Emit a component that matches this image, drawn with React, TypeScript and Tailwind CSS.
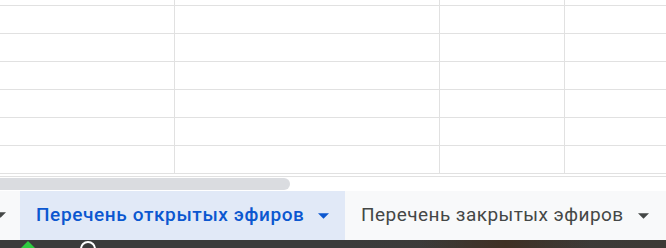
import React from "react";

const rows = Array.from({ length: 6 });

function Arrow({ className }: { className: string }) {
  return (
    <svg width="11" height="6" viewBox="0 0 10 5" className={className}>
      <path d="M0 0L5 5L10 0Z" fill="currentColor" />
    </svg>
  );
}

function Row({ h }: { h: string }) {
  return (
    <div className={`flex ${h} border-b border-[#e1e1e1]`}>
      <div className="w-[175px] shrink-0 border-r border-[#e1e1e1]" />
      <div className="w-[265px] shrink-0 border-r border-[#e1e1e1]" />
      <div className="w-[125px] shrink-0 border-r border-[#e1e1e1]" />
      <div className="flex-1" />
    </div>
  );
}

export default function App() {
  return (
    <div
      className="w-[666px] h-[248px] overflow-hidden bg-white flex flex-col"
      style={{ fontFamily: "Roboto, 'Noto Sans', sans-serif" }}
    >
      {/* Grid */}
      <Row h="h-[6px]" />
      {rows.map((_, i) => (
        <Row key={i} h="h-[28px]" />
      ))}

      {/* Scrollbar */}
      <div className="h-[3px] border-b border-[#e1e1e1]" />
      <div className="h-[14px] pt-[1px]">
        <div className="w-[290px] h-[12px] rounded-r-full bg-[#dadce0]" />
      </div>

      {/* Sheet tabs */}
      <div className="h-[49px] flex bg-[#f8f9fa] shrink-0 whitespace-nowrap">
        <div className="w-[20px] flex items-center overflow-hidden">
          <Arrow className="text-[#444746] -ml-[5px] -mt-[1px]" />
        </div>
        <div className="w-[325px] bg-[#e1e9f7] flex items-center pl-[16px] text-[#0b57d0] font-medium text-[19px] tracking-[0.62px]">
          <span>Перечень открытых эфиров</span>
          <Arrow className="ml-[13px] mt-[1px]" />
        </div>
        <div className="flex items-center pl-[16px] text-[#444746] text-[19px] tracking-[0.45px]">
          <span>Перечень закрытых эфиров</span>
          <Arrow className="ml-[14px] mt-[1px]" />
        </div>
      </div>

      {/* Taskbar strip */}
      <div className="h-[8px] relative bg-gradient-to-r from-[#3b3b3b] via-[#3b3b3b] to-[#3d3a36] shrink-0">
        <div className="absolute left-[420px] top-0 w-[170px] h-full bg-gradient-to-r from-transparent via-[#3f3024] to-transparent" />
        <div className="absolute left-[21px] top-[1px] w-0 h-0 border-l-[7px] border-r-[7px] border-b-[7px] border-l-transparent border-r-transparent border-b-[#2ecc40]" />
        <div className="absolute left-[80px] top-[1px] w-[16px] h-[16px] rounded-full border-2 border-white" />
      </div>
    </div>
  );
}
